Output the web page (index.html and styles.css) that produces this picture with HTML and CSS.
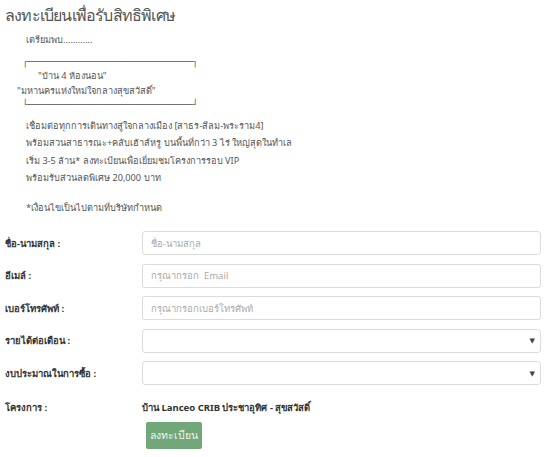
FILE: index.html
```html
<!DOCTYPE html>
<html lang="th">
<head>
<meta charset="utf-8">
<link rel="stylesheet" href="styles.css">
</head>
<body>
<div class="page">
  <h1 class="title">ลงทะเบียนเพื่อรับสิทธิพิเศษ</h1>
  <div class="intro">
    <p class="lead">เตรียมพบ............</p>
    <div class="boxed">
      <div class="corner">┌─────────────────────────────┐</div>
      <div class="l1">"บ้าน 4 ห้องนอน"</div>
      <div class="l2">"มหานครแห่งใหม่ใจกลางสุขสวัสดิ์"</div>
      <div class="corner bottom">└─────────────────────────────┘</div>
    </div>
    <p class="body">เชื่อมต่อทุกการเดินทางสู่ใจกลางเมือง [สาธร-สีลม-พระราม4]<br>พร้อมสวนสาธารณะ+คลับเฮ้าส์หรู บนพื้นที่กว่า 3 ไร่ ใหญ่สุดในทำเล<br>เริ่ม 3-5 ล้าน* ลงทะเบียนเพื่อเยี่ยมชมโครงการรอบ VIP<br>พร้อมรับส่วนลดพิเศษ 20,000 บาท</p>
    <p class="note">*เงื่อนไขเป็นไปตามที่บริษัทกำหนด</p>
  </div>
  <form class="form">
    <label class="lbl">ชื่อ-นามสกุล :</label>
    <input class="field" type="text" placeholder="ชื่อ-นามสกุล">
    <label class="lbl">อีเมล์ :</label>
    <input class="field" type="text" placeholder="กรุณากรอก  Email">
    <label class="lbl">เบอร์โทรศัพท์ :</label>
    <input class="field" type="text" placeholder="กรุณากรอกเบอร์โทรศัพท์">
    <label class="lbl">รายได้ต่อเดือน :</label>
    <div class="field select"><span class="arrow">▼</span></div>
    <label class="lbl">งบประมาณในการซื้อ :</label>
    <div class="field select"><span class="arrow">▼</span></div>
    <label class="lbl proj">โครงการ :</label>
    <div class="projname">บ้าน Lanceo CRIB ประชาอุทิศ - สุขสวัสดิ์</div>
    <div></div>
    <div class="actions"><button class="btn" type="button">ลงทะเบียน</button></div>
  </form>
</div>
</body>
</html>
```

FILE: styles.css
```css
html, body { margin: 0; padding: 0; background: #fff; }
body {
  font-family: "Noto Sans", "Open Sans", "DejaVu Sans", sans-serif;
  color: #555;
  font-size: 10px;
}
.page { padding: 2px 9px 0 5px; }
.title {
  margin: 0;
  font-size: 16px;
  letter-spacing: -0.8px;
  font-weight: normal;
  color: #555;
  line-height: 26px;
}
.intro { padding-left: 21px; font-size: 9.2px; }
.intro p { margin: 0; line-height: 17.5px; }
.lead { margin-top: 3px !important; }
.boxed { margin-top: 6px; line-height: 14.5px; }
.corner {
  font-family: "DejaVu Sans Mono", monospace;
  font-size: 10px;
  color: #666;
  letter-spacing: -0.35px;
  margin-left: -4px;
}
.l1 { padding-left: 12px; }
.l2 { margin-left: -9px; }
.body { margin-top: 4px !important; }
.note { margin-top: 12px !important; }
.form {
  margin-top: 15px;
  display: grid;
  grid-template-columns: 137px 1fr;
  row-gap: 8.5px;
  align-items: center;
}
.lbl { font-weight: bold; color: #333; font-size: 9.5px; }
.field {
  box-sizing: border-box;
  height: 24px;
  width: 100%;
  border: 1px solid #ddd;
  border-radius: 3px;
  padding: 0 8px;
  font: inherit;
  font-size: 9.5px;
  color: #555;
  background: #fff;
  outline: none;
}
.field::placeholder { color: #aaa; }
.select { display: flex; align-items: center; justify-content: flex-end; padding-right: 5px; }
.arrow { font-size: 7px; color: #444; }
.proj { margin-top: 6px; }
.projname { font-weight: bold; color: #333; margin-top: 6px; font-size: 9.5px; }
.actions { padding-left: 4px; margin-top: -1px; }
.btn {
  background: #72a77a;
  border: none;
  border-radius: 2px;
  color: #eef5ee;
  font: inherit;
  font-size: 10.5px;
  width: 56px;
  height: 27px;
  padding: 0;
}
```
